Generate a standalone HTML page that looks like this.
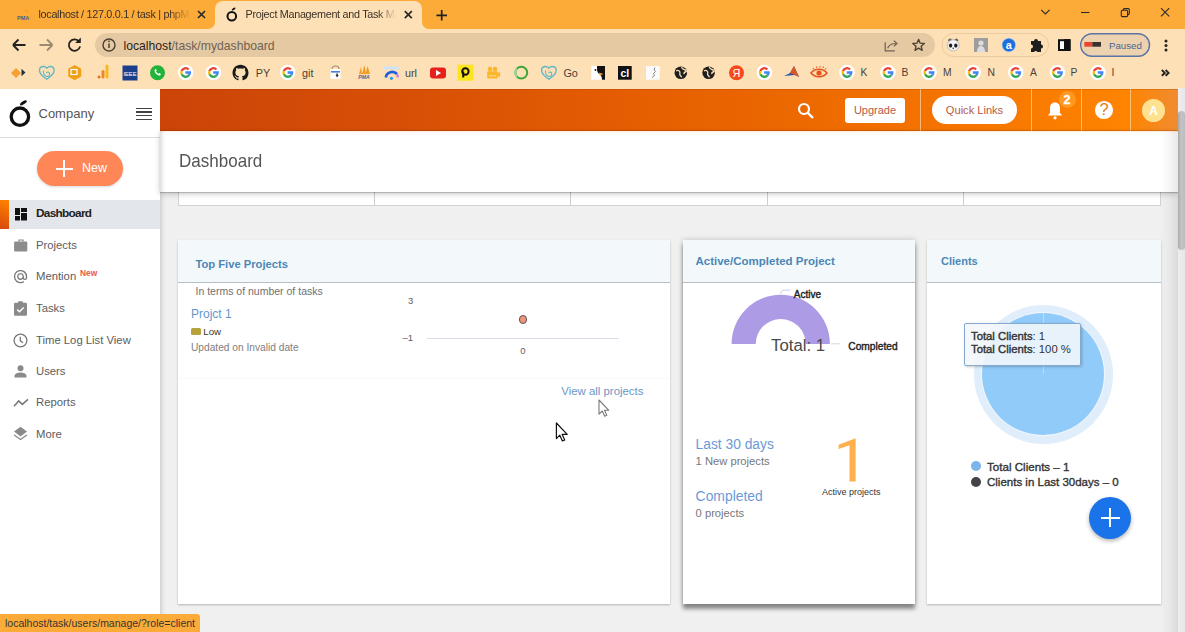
<!DOCTYPE html>
<html><head><meta charset="utf-8">
<style>
*{margin:0;padding:0;box-sizing:border-box}
html,body{width:1185px;height:632px;overflow:hidden;background:#f0f0f1;font-family:"Liberation Sans",sans-serif}
.a{position:absolute}
.t{position:absolute;white-space:nowrap;line-height:1}
</style></head><body>
<!-- browser chrome -->
<div class="a" style="left:0;top:0;width:1185px;height:29px;background:#fdab38"></div>
<div class="a" style="left:0;top:29px;width:1185px;height:60px;background:#fde0b6"></div>
<!-- active tab -->
<div class="a" style="left:207px;top:20px;width:223px;height:10px;background:#fde0b6"></div>
<div class="a" style="left:200px;top:12px;width:15px;height:16.8px;background:#fdab38;border-bottom-right-radius:7px"></div>
<div class="a" style="left:422px;top:12px;width:15px;height:16.8px;background:#fdab38;border-bottom-left-radius:7px"></div>
<div class="a" style="left:215px;top:1px;width:207px;height:30px;background:#fde0b6;border-radius:8px 8px 0 0"></div>
<!-- url pill -->
<div class="a" style="left:95px;top:33px;width:840px;height:24px;background:#e5c9a2;border-radius:12px"></div>


<!-- chrome content -->
<svg class="a" style="left:0;top:0" width="1185" height="88" viewBox="0 0 1185 88">
 <defs>
  <symbol id="g" viewBox="0 0 16 16" width="16" height="16">
   <circle cx="8" cy="8" r="7.8" fill="#fff"/>
   <path d="M11.04 4.96 A4.3 4.3 0 0 0 3.96 6.53" fill="none" stroke="#ea4335" stroke-width="2.3"/>
   <path d="M3.96 6.53 A4.3 4.3 0 0 0 4.1 9.82" fill="none" stroke="#fbbc05" stroke-width="2.3"/>
   <path d="M4.1 9.82 A4.3 4.3 0 0 0 11.29 10.76" fill="none" stroke="#34a853" stroke-width="2.3"/>
   <path d="M11.29 10.76 A4.3 4.3 0 0 0 12.3 8 H7.8" fill="none" stroke="#4285f4" stroke-width="2.3"/>
  </symbol>
 </defs>
 <!-- tab 1 favicon PMA -->
 <path d="M24 11 l3 -2 l2 4 z" fill="#f7a21b"/>
 <text x="17" y="19.5" font-family="Liberation Sans" font-size="5.5" font-weight="bold" fill="#4a5a9a">PMA</text>
 <!-- tab close x -->
 <path d="M198 11 l7 7 M205 11 l-7 7" stroke="#2a2a2a" stroke-width="1.7"/>
 <!-- active tab favicon -->
 <circle cx="231.8" cy="16.2" r="4.3" fill="none" stroke="#111" stroke-width="2"/>
 <ellipse cx="233.6" cy="9" rx="2.2" ry="1" transform="rotate(-35 233.6 9)" fill="#111"/>
 <path d="M404.8 11.2 l7 7 M411.8 11.2 l-7 7" stroke="#2a2a2a" stroke-width="1.7"/>
 <path d="M441.7 10 v10.6 M436.4 15.3 h10.6" stroke="#222" stroke-width="1.7"/>
 <!-- window controls -->
 <path d="M1041.2 9.8 l4.2 4.2 l4.2 -4.2" fill="none" stroke="#2a2a2a" stroke-width="1.1"/>
 <path d="M1081 12.5 h8.5" stroke="#2a2a2a" stroke-width="1.1"/>
 <rect x="1121.3" y="10.3" width="6.3" height="6.3" rx="1" fill="none" stroke="#2a2a2a" stroke-width="1.1"/>
 <path d="M1123.3 10.2 v-0.6 a1 1 0 0 1 1 -1 h4 a1 1 0 0 1 1 1 v4 a1 1 0 0 1 -1 1 h-0.6" fill="none" stroke="#2a2a2a" stroke-width="1.1"/>
 <path d="M1161 8.2 l8.2 8.2 M1169.2 8.2 l-8.2 8.2" stroke="#2a2a2a" stroke-width="1.1"/>
 <!-- nav -->
 <path d="M13 45 h12.5 M13 45 l5.5 -5.5 M13 45 l5.5 5.5" fill="none" stroke="#222" stroke-width="1.9"/>
 <path d="M52.5 45 h-13 M52.5 45 l-5.5 -5.5 M52.5 45 l-5.5 5.5" fill="none" stroke="#9b8a72" stroke-width="1.8"/>
 <path d="M79.2 41.8 a5.7 5.7 0 1 0 0.9 4.6" fill="none" stroke="#222" stroke-width="1.8"/>
 <path d="M80.8 37.5 v5.6 h-5.6 z" fill="#222"/>
 <circle cx="109" cy="45" r="6" fill="none" stroke="#4a3f33" stroke-width="1.4"/>
 <path d="M109 43.5 v4.5" stroke="#4a3f33" stroke-width="1.5"/><circle cx="109" cy="41.3" r="0.9" fill="#4a3f33"/>
 <!-- share / star -->
 <path d="M885.2 42.3 v8.5 h9.6" fill="none" stroke="#6e6252" stroke-width="1.2"/>
 <path d="M887.6 48.3 c1.2 -3.2 4 -4.8 8.6 -4.8 M893.8 40.6 l3.2 2.9 l-3.2 2.9" fill="none" stroke="#6e6252" stroke-width="1.2"/>
 <path d="M918.60 39.30 L920.19 43.22 L924.40 43.51 L921.17 46.23 L922.19 50.34 L918.60 48.10 L915.01 50.34 L916.03 46.23 L912.80 43.51 L917.01 43.22Z" fill="none" stroke="#4a4036" stroke-width="1.3" stroke-linejoin="round"/>
 <!-- ext pill -->
 <rect x="942" y="33.5" width="106.5" height="23" rx="11.5" fill="none" stroke="#ecca9f" stroke-width="1"/>
 <circle cx="950" cy="40.2" r="1.8" fill="#666"/><circle cx="956.4" cy="40.2" r="1.8" fill="#666"/>
 <ellipse cx="953.2" cy="45.3" rx="6" ry="5.6" fill="#f4f4f4" stroke="#9a9a9a" stroke-width=".6"/>
 <ellipse cx="950.6" cy="45.6" rx="1.7" ry="2.1" fill="#222"/><ellipse cx="955.8" cy="45.6" rx="1.7" ry="2.1" fill="#222"/><circle cx="953.2" cy="48.3" r=".8" fill="#333"/>
 <rect x="974" y="38" width="14" height="14" fill="#9d9d9d"/><circle cx="981" cy="43" r="2.6" fill="#ddd"/><path d="M977 52 c0 -4 2 -6 4 -6 s4 2 4 6z" fill="#ddd"/>
 <circle cx="1008.8" cy="45" r="7" fill="#7fb0f0"/><circle cx="1008.8" cy="45" r="6.2" fill="#1a6fdc"/><text x="1008.8" y="48.8" font-family="Liberation Sans" font-size="11" font-weight="bold" fill="#fff" text-anchor="middle">a</text>
 <path d="M1031 41 h3 a2 2 0 0 1 4 0 h3 v3.5 a2 2 0 0 1 0 4 v3.5 h-3.5 a2 2 0 0 0 -3.5 0 h-3 v-3.5 a2 2 0 0 0 0 -4z" fill="#1e1e1e"/>
 <rect x="1059" y="40.2" width="10.5" height="9.8" fill="#fff" stroke="#111" stroke-width="2"/><rect x="1064" y="39.2" width="6.5" height="11.8" fill="#111"/>
 <!-- paused pill -->
 <rect x="1080.7" y="33.7" width="68.8" height="22.6" rx="11.3" fill="#ecd2ae" stroke="#5a73a5" stroke-width="1.4"/>
 <rect x="1084.3" y="42" width="8" height="4.7" fill="#e8492c"/><rect x="1092.3" y="42" width="8.7" height="4.7" fill="#3b3330"/>
 <text x="1109" y="48.6" font-family="Liberation Sans" font-size="9.7" fill="#4e6490">Paused</text>
 <circle cx="1166" cy="41" r="1.5" fill="#222"/><circle cx="1166" cy="45.5" r="1.5" fill="#222"/><circle cx="1166" cy="50" r="1.5" fill="#222"/>
 <!-- bookmarks -->
 <path d="M11 73 l5 -5 l5 5 l-5 5 z" fill="#f7a032"/><path d="M21.5 68.8 l4 3.7 l-4 3.7 z" fill="#1f3340"/>
 <path d="M46.8 79.3 c-4.5 -3 -7.3 -5.6 -7.3 -8.8 c0 -2.6 1.9 -4 3.9 -4 c1.5 0 2.6 .7 3.4 1.7 c.8 -1 1.9 -1.7 3.4 -1.7 c2 0 3.9 1.4 3.9 4 c0 3.2 -2.8 5.8 -7.3 8.8z" fill="none" stroke="#5fb6c6" stroke-width="1.3"/><path d="M43.5 70.5 c-.8 2.5 .8 5.5 3.3 6 c2.2 .3 3.5 -1.8 2.6 -3.6 c-.8 -1.4 -2.6 -1.2 -3 .2" fill="none" stroke="#5fb6c6" stroke-width="1.1"/>
 <path d="M74.7 65 l6.5 3.8 v7.6 l-6.5 3.8 l-6.5 -3.8 v-7.6z" fill="#f0a018"/><rect x="71" y="69.5" width="6" height="5" fill="none" stroke="#fff" stroke-width="1.2"/>
 <rect x="97.5" y="75.5" width="3" height="3" rx="1.5" fill="#e8711e"/><rect x="101.5" y="70" width="3" height="8.5" rx="1.5" fill="#e98a27"/><rect x="105.5" y="64.5" width="3" height="14" rx="1.5" fill="#f9b820"/>
 <rect x="122.5" y="65.5" width="15" height="15" fill="#1b3f8b"/><text x="130" y="75.5" font-family="Liberation Sans" font-size="5.8" fill="#fff" text-anchor="middle">IEEE</text>
 <circle cx="157.5" cy="72.7" r="7.5" fill="#22b33b"/><path d="M154.5 70 c0 3 2.5 5.5 5.5 5.5 l1 -1.6 l-1.8 -1 l-.8 .9 c-1 -.5 -2 -1.5 -2.5 -2.5 l.9 -.8 l-1 -1.8z" fill="#fff"/>
 <path transform="translate(232.5 64.7)" fill="#1b1b1b" d="M8 0C3.58 0 0 3.58 0 8c0 3.54 2.29 6.53 5.47 7.59.4.07.55-.17.55-.38 0-.19-.01-.82-.01-1.49-2.01.37-2.53-.49-2.69-.94-.09-.23-.48-.94-.82-1.130-.28-.15-.68-.52-.01-.53.63-.01 1.08.58 1.23.82.72 1.21 1.87.87 2.33.66.07-.52.28-.87.51-1.07-1.78-.2-3.640-.89-3.64-3.950 0-.87.31-1.59.82-2.15-.08-.2-.36-1.02.08-2.12 0 0 .67-.21 2.2.82.64-.18 1.32-.27 2-.27.68 0 1.36.09 2 .27 1.53-1.04 2.2-.82 2.2-.82.44 1.1.16 1.92.08 2.12.51.56.82 1.27.82 2.15 0 3.07-1.87 3.75-3.65 3.95.29.25.54.73.54 1.48 0 1.07-.01 1.93-.01 2.2 0 .21.15.46.55.38A8.013 8.013 0 0016 8c0-4.42-3.58-8-8-8z"/>
  <path d="M332 69 a3.5 3 0 0 1 7 0" fill="none" stroke="#a08a70" stroke-width="1.2"/>
 <rect x="330.5" y="69" width="10" height="10" fill="#fff"/><rect x="331" y="71" width="9" height="1.6" fill="#4a80d8"/>
 <path d="M335.5 75 l1.6 2.5 l1.6 -2.5z" fill="#333"/><rect x="336.3" y="73.5" width="1.6" height="2" fill="#333"/>
 <path d="M359 74 l2 -7 l1 7z M362 74 l2.5 -9 l1.5 9z M365.5 74 l2 -8 l2.5 8z" fill="#f49b26"/>
 <text x="364" y="79" font-family="Liberation Sans" font-size="5.2" font-weight="bold" font-style="italic" fill="#5a5f8a" text-anchor="middle">PMA</text>
 <rect x="384" y="66.5" width="14.5" height="3" fill="#cde3fb"/>
 <path d="M385.8 77.5 a6.5 6.5 0 0 1 11.2 -3.5" fill="none" stroke="#1b5fe0" stroke-width="2.6"/>
 <path d="M397 74 a6.5 6.5 0 0 1 0.8 3.5" fill="none" stroke="#c57ae8" stroke-width="2.2"/>
 <circle cx="391.5" cy="78.3" r="1.6" fill="#2a9af0"/>
 <rect x="430" y="67.5" width="16" height="11" rx="3" fill="#e6211d"/><path d="M436 70 v6 l5 -3z" fill="#fff"/>
 <rect x="457.5" y="64.7" width="16" height="16" fill="#fce51f"/><circle cx="465.4" cy="71.5" r="3.2" fill="none" stroke="#111" stroke-width="2"/><path d="M463.2 71.5 v6" stroke="#111" stroke-width="2"/>
 <circle cx="490" cy="69" r="2.3" fill="#fdb52a"/><circle cx="495" cy="69" r="2.3" fill="#fdb52a"/><rect x="487.2" y="71.2" width="10.6" height="7.3" rx="1" fill="#fdb52a"/><path d="M497.5 73.3 l2.6 -1.6 v5.6 l-2.6 -1.6z" fill="#fdb52a"/><rect x="489" y="75" width="7" height="1.5" fill="#ffd27a"/>
 <circle cx="521.3" cy="72.7" r="5.9" fill="none" stroke="#3aa635" stroke-width="2"/><path d="M517 68.6 a5.9 5.9 0 0 0 0 8.2" fill="none" stroke="#9fd29a" stroke-width="2.1"/>
 <path d="M548.9 79.3 c-4.5 -3 -7.3 -5.6 -7.3 -8.8 c0 -2.6 1.9 -4 3.9 -4 c1.5 0 2.6 .7 3.4 1.7 c.8 -1 1.9 -1.7 3.4 -1.7 c2 0 3.9 1.4 3.9 4 c0 3.2 -2.8 5.8 -7.3 8.8z" fill="none" stroke="#5fb6c6" stroke-width="1.3"/><path d="M545.6 70.5 c-.8 2.5 .8 5.5 3.3 6 c2.2 .3 3.5 -1.8 2.6 -3.6 c-.8 -1.4 -2.6 -1.2 -3 .2" fill="none" stroke="#5fb6c6" stroke-width="1.1"/>
 <rect x="591.3" y="66" width="13.7" height="13.7" fill="#fff"/><path d="M597 66 h8 v13.7 h-3 c0 -3 -1 -5 -3.5 -6.5 c-1.5 -1 -1.5 -3 -1.5 -7.2z" fill="#111"/><circle cx="595.5" cy="70" r=".9" fill="#111"/><path d="M599 72.5 l4.5 1.5 l-3.5 1.6z" fill="#f29a2e"/>
 <rect x="618" y="66" width="13.7" height="13.7" fill="#111"/><text x="624.8" y="77.3" font-family="Liberation Sans" font-size="10.5" font-weight="bold" fill="#fff" text-anchor="middle">cl</text>
 <rect x="646" y="66" width="13.7" height="13.7" fill="#fbfbfb"/><path d="M655 67.5 l-1 2.5 l1.5 1.5 l-2 2 l1 2 l-2.5 2" fill="none" stroke="#777" stroke-width=".9"/>
 <circle cx="680.8" cy="72.8" r="6.3" fill="#1f1f1f"/><path d="M676.1999999999999 70.8 c1.5 -.6 3 -.2 3.6 1 c.5 1 -.4 2 .2 3.2 c.4 .8 1.3 1 1.6 2.3 M681.5999999999999 67 c.2 1.5 1.3 2.3 2.6 2.5 c1 .2 2 .8 2.1 2 c-1.6 .3 -2.5 1.2 -2.3 2.6" fill="none" stroke="#fde0b6" stroke-width="1.3"/>
 <circle cx="708.6" cy="72.8" r="6.3" fill="#1f1f1f"/><path d="M704.0 70.8 c1.5 -.6 3 -.2 3.6 1 c.5 1 -.4 2 .2 3.2 c.4 .8 1.3 1 1.6 2.3 M709.4 67 c.2 1.5 1.3 2.3 2.6 2.5 c1 .2 2 .8 2.1 2 c-1.6 .3 -2.5 1.2 -2.3 2.6" fill="none" stroke="#fde0b6" stroke-width="1.3"/>
 <circle cx="736.5" cy="72.7" r="7.5" fill="#f54a1c"/><text x="736.5" y="77" font-family="Liberation Sans" font-size="11" fill="#fff" text-anchor="middle">Я</text>
 <path d="M784 76 l6 -3 l4 -7 l5 11 l-4 -2z" fill="#3356a8"/><path d="M790 73 l4 -7 l5 11 l-4 -2z" fill="#d9582a"/>
 <path d="M811 73 c4 -5 12 -5 16 0 c-4 5 -12 5 -16 0z" fill="none" stroke="#e8531a" stroke-width="1.5"/><circle cx="819" cy="73" r="2.6" fill="#e8531a"/><path d="M813 68 l1 1.5 M816.5 66.5 l.5 1.5 M820 66 v1.5 M823.5 66.5 l-.5 1.5 M826 68 l-1 1.5" stroke="#e8531a" stroke-width="1"/>
 <use href="#g" x="177.6" y="64.5"/>
 <use href="#g" x="205.4" y="64.5"/>
 <use href="#g" x="279.8" y="64.5"/>
 <use href="#g" x="756.3" y="64.5"/>
 <use href="#g" x="839" y="64.5"/>
 <use href="#g" x="880" y="64.5"/>
 <use href="#g" x="921" y="64.5"/>
 <use href="#g" x="965.1" y="64.5"/>
 <use href="#g" x="1007.7" y="64.5"/>
 <use href="#g" x="1049.4" y="64.5"/>
 <use href="#g" x="1090" y="64.5"/>

 <path d="M1161.8 70 l3 2.9 l-3 2.9 M1165.6 70 l3 2.9 l-3 2.9" fill="none" stroke="#222" stroke-width="1.9"/>
 <path d="M0 88.5 h1185" stroke="#f6d2a6" stroke-width="1"/>
</svg>
<div class="t" style="left:38.5px;top:9px;font-size:10.8px;letter-spacing:-0.3px;color:#3b3026;width:152px;overflow:hidden;-webkit-mask-image:linear-gradient(90deg,#000 85%,transparent)">localhost / 127.0.0.1 / task | phpMyAdmin</div>
<div class="t" style="left:245.6px;top:9px;font-size:10.8px;letter-spacing:-0.3px;color:#3b3026;width:150px;overflow:hidden;-webkit-mask-image:linear-gradient(90deg,#000 88%,transparent)">Project Management and Task Management</div>
<div class="t" style="left:123.5px;top:39.7px;font-size:12.2px;color:#2d2419">localhost<span style="color:#6f6252">/task/mydashboard</span></div>
<div class="t" style="left:255.7px;top:67.8px;font-size:10.8px;color:#4a4036">PY</div>
<div class="t" style="left:302px;top:67.8px;font-size:10.8px;color:#4a4036">git</div>
<div class="t" style="left:405px;top:67.8px;font-size:10.8px;color:#4a4036">url</div>
<div class="t" style="left:563.4px;top:67.8px;font-size:10.8px;color:#4a4036">Go</div>
<div class="t" style="left:860.5px;top:67.8px;font-size:10.3px;color:#4a4036">K</div>
<div class="t" style="left:901.5px;top:67.8px;font-size:10.3px;color:#4a4036">B</div>
<div class="t" style="left:943px;top:67.8px;font-size:10.3px;color:#4a4036">M</div>
<div class="t" style="left:987.5px;top:67.8px;font-size:10.3px;color:#4a4036">N</div>
<div class="t" style="left:1030px;top:67.8px;font-size:10.3px;color:#4a4036">A</div>
<div class="t" style="left:1070.5px;top:67.8px;font-size:10.3px;color:#4a4036">P</div>
<div class="t" style="left:1111.5px;top:67.8px;font-size:10.3px;color:#4a4036">I</div>

<!-- app: sidebar -->
<div class="a" style="left:0;top:89px;width:160px;height:543px;background:#fff"></div>
<div class="a" style="left:0;top:137px;width:160px;height:1px;background:#ddd"></div>

<!-- sidebar content -->
<svg class="a" style="left:8px;top:99px" width="26" height="30" viewBox="0 0 26 30">
  <circle cx="11.9" cy="17.7" r="8.7" fill="none" stroke="#111" stroke-width="3.3"/>
  <ellipse cx="15.4" cy="3.8" rx="3.9" ry="1.5" transform="rotate(-33 15.4 3.8)" fill="#111"/>
</svg>
<div class="t" style="left:38.5px;top:107px;font-size:13px;color:#555">Company</div>
<div class="a" style="left:136px;top:107.5px;width:16px;height:1.6px;background:#444"></div>
<div class="a" style="left:136px;top:111.2px;width:16px;height:1.6px;background:#444"></div>
<div class="a" style="left:136px;top:114.9px;width:16px;height:1.6px;background:#444"></div>
<div class="a" style="left:136px;top:118.6px;width:16px;height:1.6px;background:#444"></div>

<div class="a" style="left:37px;top:151px;width:86px;height:35px;border-radius:18px;background:#ff8757;box-shadow:0 1px 3px rgba(0,0,0,.16)"></div>
<div class="a" style="left:55.5px;top:167.8px;width:17px;height:2px;background:#fff"></div>
<div class="a" style="left:63px;top:160.2px;width:2px;height:17px;background:#fff"></div>
<div class="t" style="left:82px;top:161.5px;font-size:12.5px;color:#fff">New</div>

<div class="a" style="left:0;top:200px;width:160px;height:29px;background:#e3e6ea"></div>
<div class="a" style="left:0;top:200px;width:9px;height:29px;background:linear-gradient(200deg,#ff8400,#d8480c)"></div>
<svg class="a" style="left:14px;top:207px" width="14" height="15" viewBox="0 0 14 15">
 <rect x="1" y="1" width="5" height="7" fill="#111"/><rect x="7" y="1" width="6" height="4" fill="#111"/>
 <rect x="1" y="9" width="5" height="4.5" fill="#111"/><rect x="7" y="6" width="6" height="7.5" fill="#111"/>
</svg>
<div class="t" style="left:36px;top:208.2px;font-size:11.8px;letter-spacing:-0.7px;font-weight:bold;color:#222">Dashboard</div>

<!-- projects icon -->
<svg class="a" style="left:14px;top:239px" width="14" height="14" viewBox="0 0 14 14">
 <path d="M4.3 0.4 h5.4 v2.2 h-1.3 v-1 h-2.8 v1 h-1.3z" fill="#8c8c8c"/>
 <rect x="0.1" y="2.4" width="13.2" height="10.2" rx="1.3" fill="#8c8c8c"/>
</svg>
<div class="t" style="left:36px;top:240.2px;font-size:11.3px;color:#5c5c5c">Projects</div>
<svg class="a" style="left:13px;top:269px" width="15" height="15" viewBox="0 0 15 15">
 <path d="M10.3 7.5 a2.8 2.8 0 1 1 0 -0.1 v1.3 a1.6 1.6 0 0 0 3.2 0 v-1.2 a6 6 0 1 0 -2.6 5" fill="none" stroke="#777" stroke-width="1.3"/>
</svg>
<div class="t" style="left:36px;top:271.2px;font-size:11.3px;color:#5c5c5c">Mention</div>
<div class="t" style="left:80px;top:268.5px;font-size:8.4px;font-weight:bold;color:#ea5a4e">New</div>
<svg class="a" style="left:14px;top:301px" width="13" height="15" viewBox="0 0 13 15">
 <rect x="0" y="1.8" width="13" height="13" rx="1.2" fill="#8a8a8a"/>
 <rect x="4" y="0.3" width="5" height="3" rx="1" fill="#8a8a8a"/>
 <path d="M3.3 8.6 l2.2 2.2 l4.2 -4.3" fill="none" stroke="#fff" stroke-width="1.5"/>
</svg>
<div class="t" style="left:36px;top:303.2px;font-size:11.3px;color:#5c5c5c">Tasks</div>
<svg class="a" style="left:13px;top:333px" width="15" height="15" viewBox="0 0 15 15">
 <circle cx="7.5" cy="7.5" r="6.4" fill="none" stroke="#777" stroke-width="1.3"/>
 <path d="M7.3 3.8 v4.1 l2.7 1.8" fill="none" stroke="#777" stroke-width="1.3"/>
</svg>
<div class="t" style="left:36px;top:334.7px;font-size:11.3px;color:#5c5c5c">Time Log List View</div>
<svg class="a" style="left:14px;top:365px" width="13" height="13" viewBox="0 0 13 13">
 <circle cx="6.5" cy="3.3" r="3" fill="#8a8a8a"/>
 <path d="M0.5 12.5 v-1.6 c0 -2.2 3.6 -3.4 6 -3.4 s6 1.2 6 3.4 v1.6z" fill="#8a8a8a"/>
</svg>
<div class="t" style="left:36px;top:366.2px;font-size:11.3px;color:#5c5c5c">Users</div>
<svg class="a" style="left:13px;top:397px" width="16" height="11" viewBox="0 0 16 11">
 <path d="M1 9.2 L5.7 3.9 L9.3 7.4 L15 2.4" fill="none" stroke="#777" stroke-width="1.5"/>
</svg>
<div class="t" style="left:36px;top:397.2px;font-size:11.3px;color:#5c5c5c">Reports</div>
<svg class="a" style="left:13px;top:426px" width="15" height="15" viewBox="0 0 15 15">
 <path d="M7.5 0.8 l6.5 4.8 l-6.5 4.8 l-6.5 -4.8z" fill="#8a8a8a"/>
 <path d="M1.6 8.4 l-1.1 0.8 l7 5.1 l7 -5.1 l-1.1 -0.8 l-5.9 4.3z" fill="#8a8a8a"/>
</svg>
<div class="t" style="left:36px;top:428.7px;font-size:11.3px;color:#5c5c5c">More</div>

<!-- orange header -->
<div class="a" style="left:160px;top:89px;width:1018px;height:42px;background:linear-gradient(90deg,#cc4408 0%,#d85006 25%,#e45d02 45%,#ec6800 62%,#f77800 82%,#ff8400 95%,#f08c30 100%)"></div>

<!-- header icons -->
<svg class="a" style="left:797px;top:102px" width="18" height="17" viewBox="0 0 18 17">
 <circle cx="7" cy="7" r="5" fill="none" stroke="#fff" stroke-width="2.2"/>
 <path d="M10.6 10.6 L16 16" stroke="#fff" stroke-width="2.4"/>
</svg>
<div class="a" style="left:845px;top:98px;width:60px;height:25px;border-radius:3px;background:#fff"></div>
<div class="t" style="left:845px;top:105px;width:60px;text-align:center;font-size:11px;color:#b65a44">Upgrade</div>
<div class="a" style="left:920px;top:89px;width:1px;height:42px;background:rgba(255,210,160,.75)"></div>
<div class="a" style="left:932px;top:96px;width:85px;height:27.8px;border-radius:14px;background:#fff"></div>
<div class="t" style="left:932px;top:104.8px;width:85px;text-align:center;font-size:11.1px;color:#b65a44">Quick Links</div>
<div class="a" style="left:1031px;top:89px;width:1px;height:42px;background:rgba(255,210,160,.75)"></div>
<div class="a" style="left:1081px;top:89px;width:1px;height:42px;background:rgba(255,210,160,.75)"></div>
<div class="a" style="left:1130px;top:89px;width:1px;height:42px;background:rgba(255,210,160,.75)"></div>
<svg class="a" style="left:1046px;top:101px" width="18" height="19" viewBox="0 0 18 19">
 <path d="M9 1.5 c-3.2 0 -5 2.4 -5 5.4 v5 l-2.2 2.6 h14.4 l-2.2 -2.6 v-5 c0 -3 -1.8 -5.4 -5 -5.4z" fill="#fff"/>
 <circle cx="9" cy="16.8" r="1.6" fill="#fff"/>
</svg>
<div class="a" style="left:1058.8px;top:91.3px;width:17px;height:17px;border-radius:50%;background:#ff9820"></div>
<div class="t" style="left:1058.5px;top:94.2px;width:17px;text-align:center;font-size:12.5px;font-weight:bold;color:#fff;-webkit-text-stroke:0.3px #fff">2</div>
<div class="a" style="left:1095px;top:101.4px;width:17.6px;height:17.6px;border-radius:50%;background:#fff"></div>
<div class="t" style="left:1095.2px;top:101.3px;width:17.6px;text-align:center;font-size:16.5px;color:#f07a10">?</div>
<div class="a" style="left:1142px;top:98.7px;width:23px;height:23px;border-radius:50%;background:#ffe290"></div>
<div class="t" style="left:1142px;top:104.5px;width:23px;text-align:center;font-size:12px;font-weight:bold;color:#fff">A</div>

<!-- stats row fragment -->

<div class="a" style="left:178px;top:186px;width:983px;height:20px;background:#fff;border:1px solid #d2d2d2;border-top:none"></div>
<div class="a" style="left:374px;top:186px;width:1px;height:19px;background:#cfcfcf"></div>
<div class="a" style="left:570px;top:186px;width:1px;height:19px;background:#cfcfcf"></div>
<div class="a" style="left:767px;top:186px;width:1px;height:19px;background:#cfcfcf"></div>
<div class="a" style="left:963px;top:186px;width:1px;height:19px;background:#cfcfcf"></div>
<!-- dashboard header -->
<div class="a" style="left:160px;top:131px;width:1018px;height:61px;background:#fff;box-shadow:0 1px 1px rgba(0,0,0,.18),0 2px 6px rgba(0,0,0,.2)"></div>
<div class="t" style="left:178.5px;top:151.9px;font-size:18.5px;color:#555;transform:scaleX(0.92);transform-origin:0 0">Dashboard</div>

<div class="a" style="left:160px;top:130px;width:1018px;height:1px;background:rgba(110,35,0,.22)"></div>
<div class="a" style="left:160px;top:89px;width:1018px;height:1px;background:rgba(110,35,0,.18)"></div>
<div class="a" style="left:160px;top:131px;width:1018px;height:2px;background:linear-gradient(180deg,rgba(255,150,70,.22),rgba(255,150,70,0))"></div>
<!-- cards -->
<div class="a" style="left:178px;top:240px;width:492px;height:364px;background:#fff;box-shadow:0 1px 2px rgba(0,0,0,.25)"></div>
<div class="a" style="left:683px;top:240px;width:232px;height:364px;background:#fff;box-shadow:0 5px 4px rgba(0,0,0,.4),0 0 6px rgba(0,0,0,.2)"></div>
<div class="a" style="left:927px;top:240px;width:234px;height:364px;background:#fff;box-shadow:0 1px 2px rgba(0,0,0,.25)"></div>


<!-- card 1 content -->
<div class="a" style="left:178px;top:240px;width:492px;height:43px;background:#f3f9fb;border-bottom:1px solid #b5bfc3"></div>
<div class="t" style="left:195.5px;top:258.5px;font-size:11.2px;font-weight:bold;color:#4c86b6">Top Five Projects</div>
<div class="t" style="left:195.5px;top:286px;font-size:10.5px;color:#707070">In terms of number of tasks</div>
<div class="t" style="left:408px;top:296px;font-size:9.5px;color:#606060">3</div>
<div class="t" style="left:191px;top:307.8px;font-size:12px;color:#6597cb">Projct 1</div>
<div class="a" style="left:191px;top:328px;width:9.5px;height:7px;border-radius:1.5px;background:#b5a23a"></div>
<div class="t" style="left:203.3px;top:326.5px;font-size:9.7px;color:#333">Low</div>
<div class="t" style="left:191px;top:343px;font-size:10.2px;color:#808080">Updated on Invalid date</div>
<div class="t" style="left:402.5px;top:333px;font-size:9.5px;color:#606060">&#8211;1</div>
<div class="a" style="left:427px;top:337.5px;width:192px;height:1px;background:#dcdcea"></div>
<div class="a" style="left:518.8px;top:315.2px;width:8.4px;height:8.4px;border-radius:50%;background:#f29479;border:1px solid #555"></div>
<div class="t" style="left:513px;top:346.3px;width:20px;text-align:center;font-size:9.5px;color:#606060">0</div>
<div class="a" style="left:178px;top:378px;width:492px;height:1px;background:#fafafa"></div>
<div class="t" style="left:561.3px;top:386px;font-size:11.4px;color:#6b97c5">View all projects</div>

<!-- card 2 content -->
<div class="a" style="left:683px;top:240px;width:232px;height:42.5px;background:#f3f9fb;border-bottom:1px solid #b5bfc3"></div>
<div class="t" style="left:695.5px;top:255.9px;font-size:11.5px;font-weight:bold;color:#4c86b6">Active/Completed Project</div>
<svg class="a" style="left:683px;top:283px" width="232" height="80" viewBox="683 283 232 80">
 <path d="M731.55 344 A49.2 49.2 0 0 1 829.95 344 L805.75 344 A25 25 0 0 0 755.75 344 Z" fill="#ad9be6"/>
 <path d="M780.8 293.6 c0 -2.5 1.5 -3.5 3.5 -3.5 h6" fill="none" stroke="#d0c8ee" stroke-width="1"/>
 <path d="M831 343.8 h9" fill="none" stroke="#d8d8d8" stroke-width="1"/>
</svg>
<div class="t" style="left:793.8px;top:289.7px;font-size:10px;color:#222;-webkit-text-stroke:0.4px #222">Active</div>
<div class="t" style="left:771px;top:338.3px;font-size:16.8px;color:#4a4a4a">Total: 1</div>
<div class="t" style="left:848.3px;top:342.3px;font-size:10.2px;color:#222;-webkit-text-stroke:0.4px #222">Completed</div>
<div class="t" style="left:695.6px;top:438px;font-size:13.8px;color:#6b9ad6">Last 30 days</div>
<div class="t" style="left:695.6px;top:455.8px;font-size:11.2px;color:#777">1 New projects</div>
<div class="t" style="left:695.6px;top:489.5px;font-size:13.9px;color:#6b9ad6">Completed</div>
<div class="t" style="left:695.6px;top:508px;font-size:11.2px;color:#777">0 projects</div>
<svg class="a" style="left:835px;top:436px" width="26" height="48" viewBox="0 0 26 48">
 <path d="M14.5 45.6 H20.6 V2.2 L3.6 8.7 V13.1 L14.5 9.3 Z" fill="#ffb04d"/>
</svg>
<div class="t" style="left:822px;top:487.7px;font-size:9px;color:#333">Active projects</div>

<!-- card 3 content -->
<div class="a" style="left:927px;top:240px;width:234px;height:42.5px;background:#f3f9fb;border-bottom:1px solid #b5bfc3"></div>
<div class="t" style="left:941px;top:256px;font-size:11px;font-weight:bold;color:#4c86b6">Clients</div>
<div class="a" style="left:973.9px;top:304.8px;width:139px;height:139px;border-radius:50%;background:#e0edfa"></div>
<div class="a" style="left:982.4px;top:313.3px;width:122px;height:122px;border-radius:50%;background:#91cbf9;box-shadow:0 0 0 1px rgba(255,255,255,.55)"></div>
<div class="a" style="left:1043px;top:313.3px;width:1px;height:61px;background:rgba(255,255,255,.35)"></div>
<div class="a" style="left:964px;top:322.8px;width:117px;height:43.5px;background:rgba(244,247,250,.88);border:1px solid #86a9cf;border-radius:2px;box-shadow:1px 1px 3px rgba(0,0,0,.22)"></div>
<div class="t" style="left:971px;top:331.2px;font-size:11.3px;color:#333"><span style="-webkit-text-stroke:0.4px #333">Total Clients</span>: 1</div>
<div class="t" style="left:971px;top:343.7px;font-size:11.3px;color:#333"><span style="-webkit-text-stroke:0.4px #333">Total Clients</span>: 100 %</div>
<div class="a" style="left:970.5px;top:461.2px;width:10px;height:10px;border-radius:50%;background:#7cb5ec"></div>
<div class="t" style="left:987px;top:461.2px;font-size:11.6px;color:#333;-webkit-text-stroke:0.35px #333">Total Clients &#8211; 1</div>
<div class="a" style="left:970.5px;top:476.9px;width:10px;height:10px;border-radius:50%;background:#434348"></div>
<div class="t" style="left:987px;top:476.5px;font-size:11.5px;color:#333;-webkit-text-stroke:0.35px #333">Clients in Last 30days &#8211; 0</div>
<div class="a" style="left:1088.9px;top:496.7px;width:42px;height:42px;border-radius:50%;background:#1a73e8;box-shadow:0 2px 4px rgba(0,0,0,.3)"></div>
<div class="a" style="left:1100.5px;top:516.7px;width:19px;height:2px;background:#fff"></div>
<div class="a" style="left:1109px;top:508.2px;width:2px;height:19px;background:#fff"></div>

<div class="a" style="left:160px;top:131px;width:6px;height:501px;background:linear-gradient(90deg,rgba(0,0,0,.13),rgba(0,0,0,.04) 50%,rgba(0,0,0,0))"></div>
<!-- cursors -->
<svg class="a" style="left:595px;top:397px" width="20" height="24" viewBox="-4 -3 20 24">
 <path d="M0 0 L0 14.2 L3.3 11 L5.7 16.2 L7.8 15.3 L5.5 10.3 L9.8 10.3 Z" fill="#fff" stroke="#7a7a7a" stroke-width="1.1" stroke-linejoin="round"/>
</svg>
<svg class="a" style="left:552px;top:420px" width="20" height="25" viewBox="-4 -3 20 25">
 <path d="M0.4 0 L0.4 15.6 L3.8 12.2 L6.4 18 L8.7 17 L6.2 11.4 L11.2 11.4 Z" fill="#fff" stroke="#111" stroke-width="1.2" stroke-linejoin="round"/>
</svg>
<!-- scrollbar -->
<div class="a" style="left:1160px;top:131px;width:18px;height:501px;background:linear-gradient(90deg,rgba(0,0,0,0),rgba(0,0,0,.03) 50%,rgba(0,0,0,.09))"></div>
<div class="a" style="left:1178px;top:88px;width:7px;height:544px;background:linear-gradient(90deg,#eeeeee,#e7e7e7)"></div>
<div class="a" style="left:1178.3px;top:111px;width:7px;height:139px;background:linear-gradient(90deg,#a9a9a9,#c4c4c4 45%,#bcbcbc);border-radius:3.5px"></div>
<!-- status bar -->
<div class="a" style="left:0;top:614px;width:200px;height:18px;background:#fdab38;border-top-right-radius:3px"></div>
<div class="t" style="left:5px;top:618px;font-size:10.5px;color:#333">localhost/task/users/manage/?role=client</div>

</body></html>
